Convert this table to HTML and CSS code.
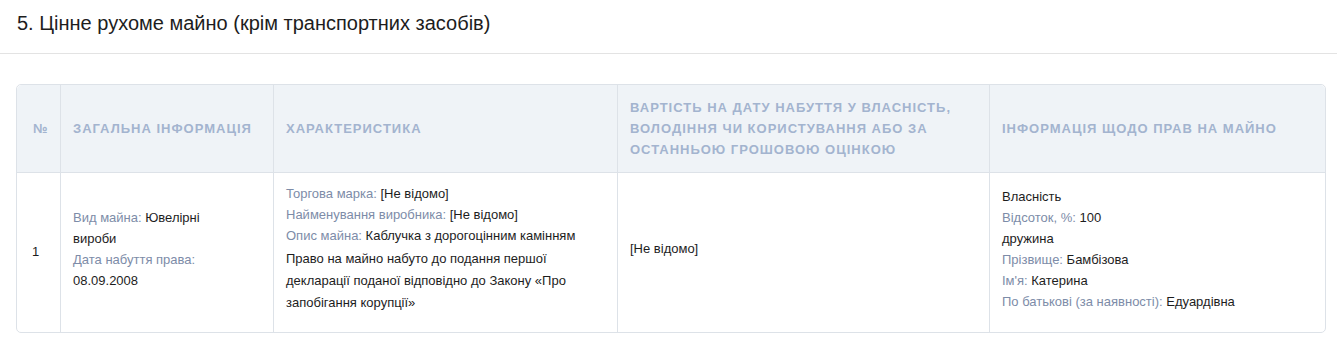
FILE: index.html
```html
<!DOCTYPE html>
<html lang="uk">
<head>
<meta charset="utf-8">
<link rel="stylesheet" href="styles.css">
</head>
<body>
<div class="section-head">
  <h2 class="section-title">5. Цінне рухоме майно (крім транспортних засобів)</h2>
</div>
<div class="section-body">
  <table class="data-table">
    <colgroup>
      <col class="c-num"><col class="c-gen"><col class="c-char"><col class="c-cost"><col class="c-rights">
    </colgroup>
    <thead>
      <tr>
        <th>№</th>
        <th>Загальна інформація</th>
        <th>Характеристика</th>
        <th>Вартість на дату набуття у власність, володіння чи користування або за останньою грошовою оцінкою</th>
        <th>Інформація щодо прав на майно</th>
      </tr>
    </thead>
    <tbody>
      <tr>
        <td class="num">1</td>
        <td>
          <div class="narrow">
            <div><span class="lbl">Вид майна:</span> Ювелірні вироби</div>
            <div><span class="lbl">Дата набуття права:</span> 08.09.2008</div>
          </div>
        </td>
        <td>
          <div><span class="lbl">Торгова марка:</span> [Не відомо]</div>
          <div><span class="lbl">Найменування виробника:</span> [Не відомо]</div>
          <div><span class="lbl">Опис майна:</span> Каблучка з дорогоцінним камінням</div>
          <p class="note">Право на майно набуто до подання першої декларації поданої відповідно до Закону «Про запобігання корупції»</p>
        </td>
        <td>[Не відомо]</td>
        <td>
          <div>Власність</div>
          <div><span class="lbl">Відсоток, %:</span> 100</div>
          <div>дружина</div>
          <div><span class="lbl">Прізвище:</span> Бамбізова</div>
          <div><span class="lbl">Ім'я:</span> Катерина</div>
          <div><span class="lbl">По батькові (за наявності):</span> Едуардівна</div>
        </td>
      </tr>
    </tbody>
  </table>
</div>
</body>
</html>
```
FILE: styles.css
```css
html, body {
  margin: 0;
  padding: 0;
  background: #fff;
  font-family: "Liberation Sans", Arial, sans-serif;
  color: #222;
}
.section-head {
  border-bottom: 1px solid #e3e3e3;
  padding: 9px 17px 16px;
}
.section-title {
  margin: 0;
  font-size: 20px;
  font-weight: normal;
  line-height: 28px;
  color: #1d1d1d;
}
.section-body {
  padding: 30px 11px 0 16px;
}
.data-table {
  width: 100%;
  border-collapse: separate;
  border-spacing: 0;
  border: 1px solid #dde2e8;
  border-radius: 5px;
  font-size: 13px;
  line-height: 21px;
  table-layout: fixed;
}
.c-num { width: 43px; }
.c-gen { width: 213px; }
.c-char { width: 344px; }
.c-cost { width: 372px; }
.data-table th {
  background: #eff3f7;
  color: #a3b4cf;
  font-weight: bold;
  text-transform: uppercase;
  letter-spacing: 1px;
  text-align: left;
  padding: 12px 12px;
  font-size: 13px;
  line-height: 21px;
  border-bottom: 1px solid #dde2e8;
  border-left: 1px solid #dde2e8;
  vertical-align: middle;
}
.data-table th:first-child {
  border-left: none;
  border-top-left-radius: 5px;
  padding-left: 16px;
}
.data-table th:last-child { border-top-right-radius: 5px; }
.data-table td {
  padding: 10px 12px 18px;
  vertical-align: middle;
  border-left: 1px solid #dde2e8;
  color: #1d1d1d;
}
.data-table td.num {
  border-left: none;
  padding: 13px 12px 16px 15px;
}
.narrow { max-width: 150px; }
.lbl { color: #7d8ca8; }
.note {
  margin: 2px 0 0;
  line-height: 22px;
  max-width: 290px;
}
```
